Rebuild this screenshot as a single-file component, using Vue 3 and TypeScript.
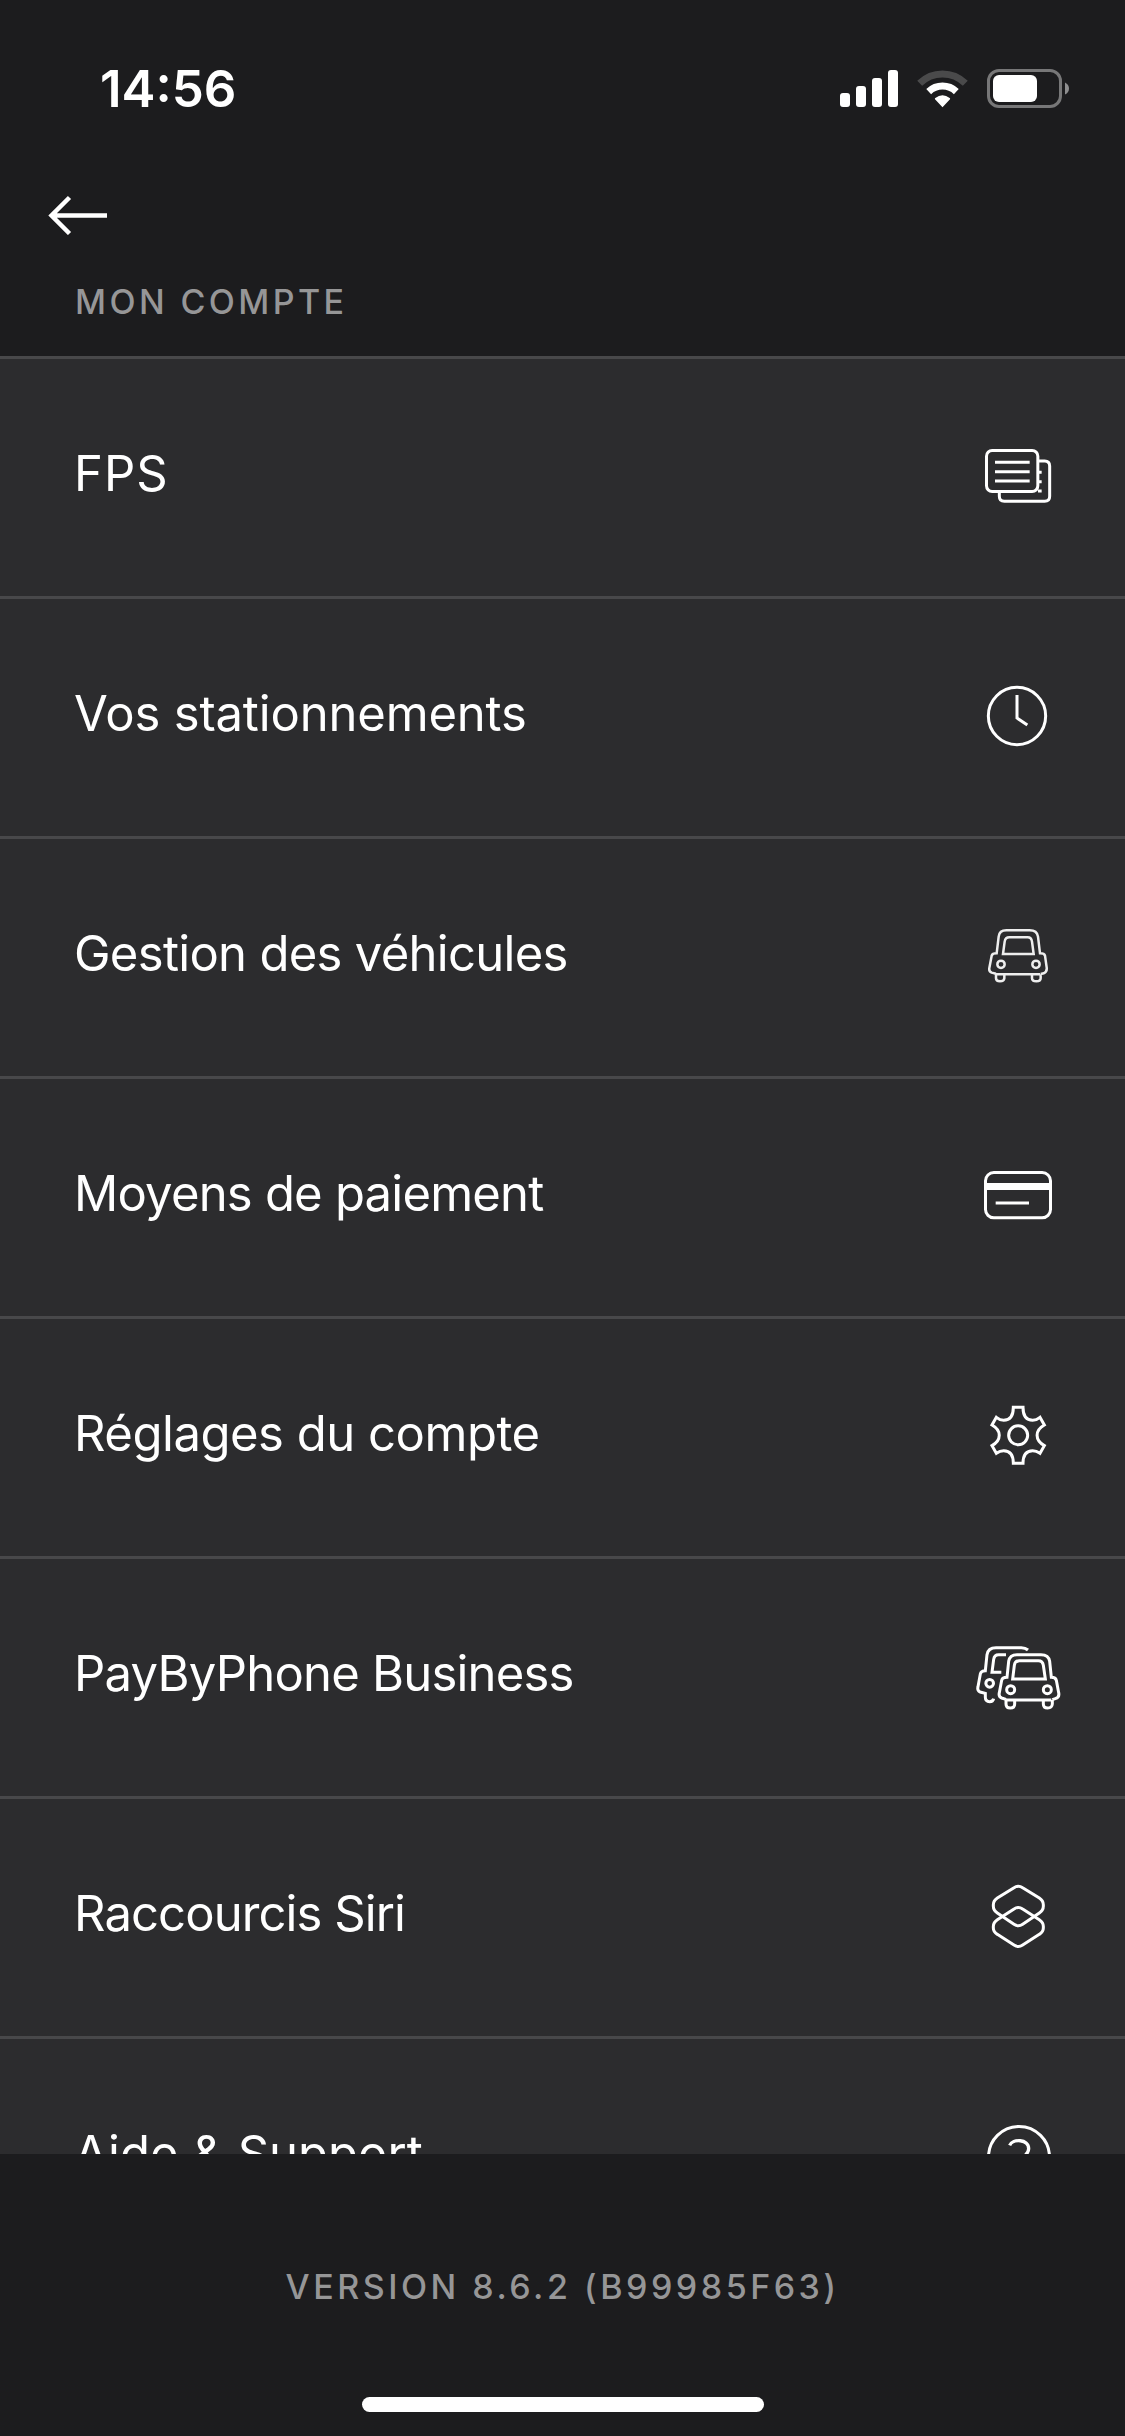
<script setup lang="ts">
interface MenuItem {
  label: string
  icon: string
  spacing: number
}

const items: MenuItem[] = [
  { label: 'FPS', icon: 'tickets', spacing: 1 },
  { label: 'Vos stationnements', icon: 'clock', spacing: -0.16 },
  { label: 'Gestion des véhicules', icon: 'car', spacing: -0.7 },
  { label: 'Moyens de paiement', icon: 'card', spacing: -0.79 },
  { label: 'Réglages du compte', icon: 'gear', spacing: -0.48 },
  { label: 'PayByPhone Business', icon: 'cars', spacing: -0.79 },
  { label: 'Raccourcis Siri', icon: 'siri', spacing: -0.91 },
  { label: 'Aide & Support', icon: 'help', spacing: 0 },
]
</script>

<template>
  <main class="screen">
    <header class="top">
      <div class="status">
        <span class="time">14:56</span>
        <svg class="indicators" viewBox="0 0 240 40" width="240" height="40">
          <g fill="#fff">
            <rect x="0" y="24" width="10" height="14" rx="3" />
            <rect x="16" y="17" width="10" height="21" rx="3" />
            <rect x="32" y="9" width="10" height="29" rx="3" />
            <rect x="48" y="1" width="10" height="37" rx="3" />
          </g>
          <path d="M79.7 14.3A32.5 32.5 0 0 1 125.3 14.3" fill="none" stroke="#4a4a4b" stroke-width="7" />
          <path d="M88.7 22.6A20 20 0 0 1 116.3 22.6" fill="none" stroke="#fff" stroke-width="7" />
          <path d="M102.5 38.3L95 30.2Q94.6 29.5 95.3 29Q102.5 23.5 109.7 29Q110.4 29.5 110 30.2Z" fill="#fff" />
          <rect x="148.5" y="1.5" width="72" height="36" rx="10.5" fill="none" stroke="#777778" stroke-width="3" />
          <rect x="153" y="6" width="44" height="27" rx="6" fill="#fff" />
          <path d="M225 13.5Q229 15.5 229 19.5T225 25.5Z" fill="#8e8e8f" />
        </svg>
      </div>
      <svg class="back" viewBox="0 0 60 40" width="60" height="40">
        <path d="M59 20.500H4M21.500 2.500L3.500 20.500L21.500 38.500" fill="none" stroke="#fff" stroke-width="4.500" />
      </svg>
      <h1 class="title">MON COMPTE</h1>
    </header>

    <ul class="menu">
      <li v-for="item in items" :key="item.label" class="row">
        <span class="label" :style="{ letterSpacing: item.spacing + 'px' }">{{ item.label }}</span>
        <svg class="icon" viewBox="0 0 330 270" width="110" height="90" fill="none" stroke="#fff" stroke-width="9">
          <g v-if="item.icon === 'tickets'">
            <rect x="79.5" y="61.5" width="154" height="123" rx="17" />
            <path d="M105 97H209M105 125H209M105 153H209" />
            <path d="M236 93H254Q269 93 269 108V199Q269 214 254 214H133Q118 214 118 199V187" />
            <path d="M236 127H245M236 155H245M234 183H245" />
          </g>
          <g v-else-if="item.icon === 'clock'">
            <circle cx="171" cy="138" r="86" />
            <path d="M171 75V144L202 165" />
          </g>
          <g v-else-if="item.icon === 'car'" stroke-width="7.5" stroke="#eee">
            <path d="M108 193H240M108 193V205Q108 214 120 214T133 205V195M216 195V205Q216 214 229 214T242 205V193M108 191L95 188Q86 184 88 174L95 137Q97 130 110 130L116 80Q118 61 139 61H209Q231 61 234 80L240 130Q253 130 255 137L260 172Q262 185 251 190L242 192" />
            <path d="M129 132L134 95Q136 82 148 82H203Q214 82 216 95L221 132Z" />
            <circle cx="123" cy="163" r="11" />
            <circle cx="228" cy="163" r="11" />
          </g>
          <g v-else-if="item.icon === 'card'">
            <rect x="76.5" y="67.5" width="195" height="136" rx="25" />
            <path d="M80 109.5H268" stroke-width="21" />
            <path d="M107 159H207" />
          </g>
          <g v-else-if="item.icon === 'gear'">
            <path d="M160 52H189Q189 91 218 91Q229 91 240 82L253 105C224 121 224 151 253 167L240 190Q229 182 218 182Q189 182 189 220H160Q160 182 131 182Q120 182 109 190L96 167C125 151 125 121 96 105L109 82Q120 91 131 91Q160 91 160 52Z" />
            <circle cx="174.5" cy="136" r="28.5" />
          </g>
          <g v-else-if="item.icon === 'cars'">
            <path d="M204 60Q196 53 184 53H108Q84 53 81 74L76 122Q63 122 61 132L54 170Q51 182 60 186L76 190V202Q76 215 89 215Q99 215 101 206M124 127H96L101 88Q103 74 116 74H138" />
            <circle cx="89" cy="160" r="11.5" />
            <path d="M138 210H274M138 210V222Q138 234 151 234T164 222V211M250 211V222Q250 234 263 234T277 222V210M138 208L125 204Q115 200 118 188L125 151Q127 142 141 142L146 94Q149 74 171 74H243Q266 74 269 94L274 142Q287 142 289 151L296 188Q299 202 286 206L277 209" />
            <path d="M158 147L163 106Q165 92 178 92H235Q248 92 250 106L256 147Z" />
            <circle cx="152" cy="179" r="12" />
            <circle cx="262" cy="179" r="12" />
          </g>
          <g v-else-if="item.icon === 'siri'">
            <path d="M162 53Q175 44 188 53L238 84Q250 92 250 104V109Q250 121 238 129L188 163Q175 172 162 163L112 129Q100 121 100 109V104Q100 92 112 84Z" />
            <path d="M162 117Q175 108 188 117L238 149Q250 157 250 169V174Q250 186 238 193L188 225Q175 234 162 225L112 193Q100 186 100 174V169Q100 157 112 149Z" />
          </g>
          <g v-else>
            <circle cx="177" cy="141" r="91.5" />
            <path d="M149 106C158 86 206 86 206 116C206 139 179 139 179 163" stroke-width="10" />
            <circle cx="179" cy="185" r="2" />
          </g>
        </svg>
      </li>
    </ul>

    <footer class="footer">
      <p class="version">VERSION 8.6.2 (B99985F63)</p>
      <div class="home"></div>
    </footer>
  </main>
</template>

<style>
body {
  margin: 0;
  background: #1c1c1e;
}
</style>

<style scoped>
.screen {
  display: flex;
  flex-direction: column;
  width: 1125px;
  height: 2436px;
  overflow: hidden;
  background: #1c1c1e;
  font-family: Inter, "Liberation Sans", sans-serif;
  color: #fff;
}
.top {
  flex: none;
  height: 356px;
  display: flex;
  flex-direction: column;
}
.status {
  display: flex;
  justify-content: space-between;
  padding: 59px 45px 0 100px;
  height: 120px;
  box-sizing: border-box;
}
.time {
  font-size: 51px;
  line-height: 60px;
  font-weight: 600;
}
.indicators {
  margin-top: 10px;
}
.back {
  margin: 75px 0 0 48px;
}
.title {
  margin: 47px 0 0 75px;
  font-size: 34px;
  line-height: 40px;
  font-weight: 500;
  letter-spacing: 3.4px;
  color: #969697;
}
.menu {
  flex: none;
  height: 1798px;
  margin: 0;
  padding: 0;
  overflow: hidden;
  list-style: none;
  background: #2c2c2e;
}
.row {
  box-sizing: border-box;
  display: flex;
  justify-content: space-between;
  height: 240px;
  padding: 0 55px 0 74px;
  border-top: 3px solid #48484a;
}
.label {
  margin-top: 85px;
  font-size: 49px;
  line-height: 60px;
  font-weight: 400;
  white-space: nowrap;
}
.icon {
  flex: none;
  margin-top: 71px;
}
.footer {
  flex: 1;
  display: flex;
  flex-direction: column;
  align-items: center;
}
.version {
  margin: 113px 0 0;
  font-size: 34px;
  line-height: 40px;
  font-weight: 500;
  letter-spacing: 3.5px;
  color: #969697;
}
.home {
  width: 402px;
  height: 15px;
  margin: 90px 0 0 1px;
  border-radius: 8px;
  background: #fff;
}
</style>
